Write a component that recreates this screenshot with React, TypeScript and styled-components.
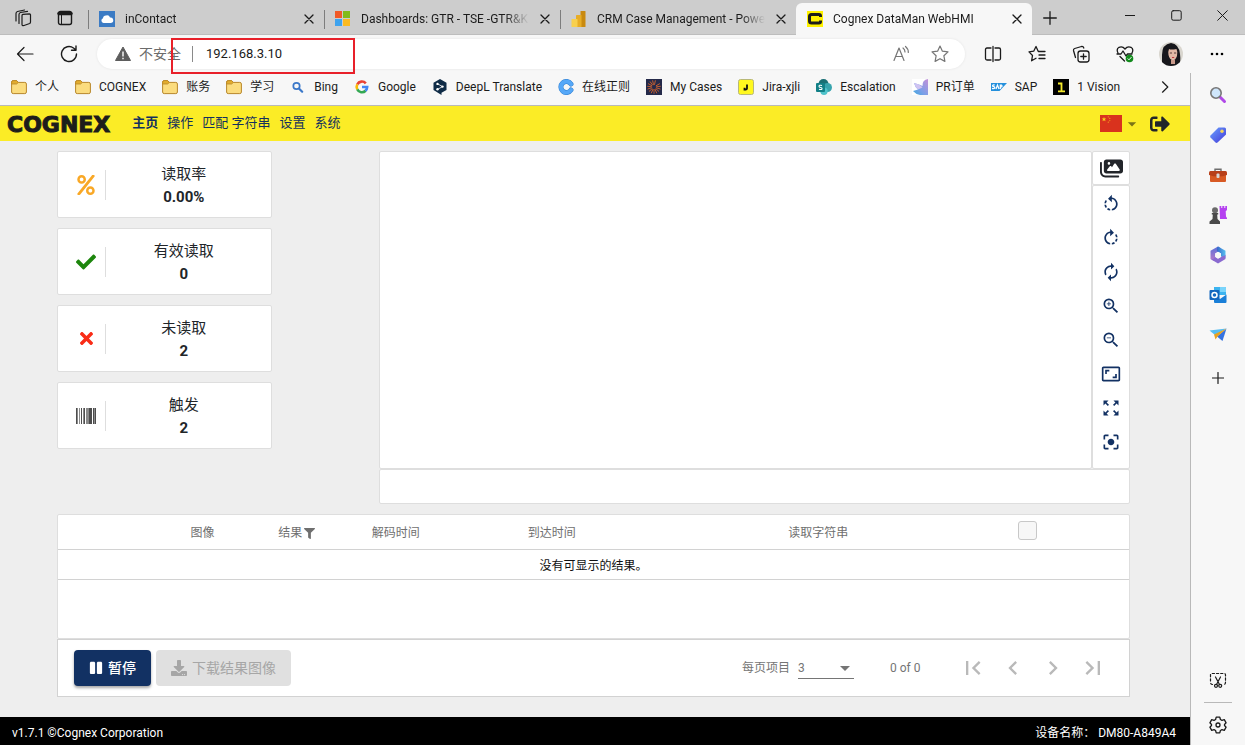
import React from 'react';
import styled, { createGlobalStyle, css } from 'styled-components';
import {
  MdRotateLeft, MdRotateRight, MdAutorenew, MdZoomIn, MdZoomOut, MdAspectRatio, MdZoomOutMap,
  MdCenterFocusStrong, MdFirstPage, MdChevronLeft, MdChevronRight, MdLastPage, MdArrowDropDown,
} from 'react-icons/md';
import { FaSignOutAlt, FaCheck, FaTimes, FaPercent, FaFilter, FaPause, FaDownload } from 'react-icons/fa';
import { FaImages } from 'react-icons/fa6';

const GlobalStyle = createGlobalStyle`
  *, *::before, *::after { box-sizing: border-box; }
  body {
    margin: 0;
    font-family: Roboto, "Noto Sans CJK SC", sans-serif;
    font-size: 12px;
    line-height: 16px;
    color: #1b1b1b;
    background: #f7f7f7;
  }
  button, input, select { font: inherit; color: inherit; }
  svg { display: block; flex: none; }
`;

/* ---------- shared ---------- */

const IconButton = styled.button<{ $w?: number; $h?: number; $color?: string }>`
  display: flex;
  align-items: center;
  justify-content: center;
  flex: none;
  width: ${(p) => p.$w ?? 44}px;
  height: ${(p) => p.$h ?? 30}px;
  padding: 0;
  border: 0;
  background: none;
  color: ${(p) => p.$color ?? '#1b1b1b'};
`;

type LineProps = { size?: number; children: React.ReactNode; box?: number; stroke?: number; color?: string };
const Line = ({ size = 18, box = 18, stroke = 1.2, color = 'currentColor', children }: LineProps) => (
  <svg width={size} height={size} viewBox={`0 0 ${box} ${box}`} fill="none" stroke={color}
    strokeWidth={stroke} strokeLinecap="round" strokeLinejoin="round" aria-hidden="true">
    {children}
  </svg>
);

const CloseIcon = ({ size = 10 }: { size?: number }) => (
  <Line size={size} box={10} stroke={1.3}><path d="M1 1l8 8M9 1L1 9" /></Line>
);

/* ---------- browser window ---------- */

const Window = styled.div`
  display: flex;
  flex-direction: column;
  min-height: 100vh;
`;

const TabStrip = styled.header`
  display: flex;
  height: 35px;
  background: #cdcdcd;
  border-bottom: 1px solid #bdbdbd;
`;

const StripTools = styled.div`
  display: flex;
  align-items: center;
  padding: 2px 2px 0;
`;

const Tab = styled.div<{ $active?: boolean }>`
  display: flex;
  align-items: center;
  flex: 0 1 236px;
  min-width: 0;
  gap: 10px;
  padding: 3px 9px 0 11px;
  position: relative;
  ${(p) => p.$active
    ? css`
        height: 32px;
        margin-top: 3px;
        padding-top: 0;
        background: #f7f7f7;
        border-radius: 6px 6px 0 0;
      `
    : css`
        &::before {
          content: '';
          position: absolute;
          left: 0;
          top: 10px;
          width: 1px;
          height: 19px;
          background: #7d7d7d;
        }
      `}
`;

const TabTitle = styled.span`
  flex: 1;
  min-width: 0;
  overflow: hidden;
  white-space: nowrap;
  mask-image: linear-gradient(90deg, #000 calc(100% - 24px), transparent);
`;

const WindowControls = styled.div`
  display: flex;
  margin-left: auto;
`;

const Toolbar = styled.div`
  display: flex;
  align-items: center;
  height: 38px;
  padding: 0 6px 0 3px;
  background: #f7f7f7;
`;

const AddressBar = styled.div`
  display: flex;
  align-items: center;
  flex: 1;
  min-width: 0;
  height: 30px;
  margin: 0 6px;
  padding: 0 6px 0 18px;
  border-radius: 15px;
  background: #fff;
  box-shadow: 0 0 3px rgba(0, 0, 0, 0.08);
  position: relative;
`;

const Insecure = styled.span`
  display: flex;
  align-items: center;
  gap: 8px;
  flex: none;
  padding-right: 11px;
  font-size: 14px;
  color: #6b6b6b;
`;

const AddressInput = styled.input`
  flex: 1;
  min-width: 0;
  padding: 0 0 0 13px;
  border: 0;
  border-left: 1px solid #8a8a8a;
  height: 16px;
  outline: 0;
  background: none;
  font-size: 13px;
`;

const Highlight = styled.div`
  position: absolute;
  left: 74px;
  top: -1px;
  width: 184px;
  height: 36px;
  border: 2px solid #e8202a;
  pointer-events: none;
`;

const Body = styled.div`
  display: flex;
  flex: 1;
`;

const Main = styled.div`
  display: flex;
  flex-direction: column;
  flex: 1;
  min-width: 0;
`;

const Bookmarks = styled.nav`
  display: flex;
  align-items: center;
  gap: 16px;
  height: 33px;
  padding: 0 15px 4px 11px;
  border-bottom: 1px solid #b9b9b9;
  background: #f7f7f7;
  white-space: nowrap;
  overflow: hidden;
`;

const Bookmark = styled.a`
  display: flex;
  align-items: center;
  gap: 8px;
  color: inherit;
  text-decoration: none;
`;

const More = styled.button`
  margin-left: auto;
  padding: 4px;
  border: 0;
  background: none;
`;

const Sidebar = styled.aside`
  display: flex;
  flex-direction: column;
  align-items: center;
  flex: none;
  width: 55px;
  padding: 2px 0 0;
  border-left: 1px solid #b9b9b9;
  background: #f7f7f7;
`;

const SidebarEnd = styled.div`
  display: flex;
  flex-direction: column;
  align-items: center;
  margin-top: auto;
`;

const Rule = styled.hr`
  width: 28px;
  margin: 2px 0;
  border: 0;
  border-top: 1px solid #b9b9b9;
`;

/* ---------- WebHMI page ---------- */

const AppHeader = styled.div`
  display: flex;
  align-items: center;
  height: 35px;
  padding: 0 20px 0 7px;
  background: #fbec26;
  color: #12305e;
`;

const Logo = styled.span`
  margin-right: 22px;
  padding-top: 3px;
  font: bold 22px/22px "DejaVu Sans", sans-serif;
  color: #1d1d1b;
  -webkit-text-stroke: 1px #1d1d1b;
`;

const Menu = styled.nav`
  display: flex;
  gap: 9px;
  padding-bottom: 2px;
  font-size: 13px;
`;

const MenuItem = styled.a<{ $current?: boolean }>`
  color: inherit;
  text-decoration: none;
  font-weight: ${(p) => (p.$current ? 700 : 400)};
`;

const HeaderTools = styled.div`
  display: flex;
  align-items: center;
  gap: 8px;
  margin-left: auto;
`;

const PlainButton = styled.button`
  display: flex;
  align-items: center;
  padding: 0;
  border: 0;
  background: none;
  color: #22252a;
`;

const Content = styled.main`
  flex: 1;
  padding: 10px 60px 20px 57px;
  background: #eee;
`;

const Upper = styled.div`
  display: grid;
  grid-template-columns: 2fr 7fr;
  column-gap: 10%;
  margin-bottom: 10px;
`;

const panel = css`
  background: #fff;
  border: 1px solid #dedede;
  border-radius: 2px;
`;

const Stats = styled.div`
  display: flex;
  flex-direction: column;
  gap: 10px;
`;

const StatCard = styled.section`
  ${panel}
  display: flex;
  align-items: center;
  height: 67px;
  padding: 0 9px;
`;

const StatIcon = styled.div`
  display: flex;
  align-items: center;
  justify-content: center;
  width: 39px;
  height: 30px;
  border-right: 1px solid #dedede;
`;

const StatText = styled.dl`
  flex: 1;
  margin: 0;
  padding-top: 2px;
  text-align: center;
  font-size: 15px;
  line-height: 23px;
  color: #212529;
`;

const StatValue = styled.dd`
  margin: 0;
  font-weight: 700;
`;

const Viewer = styled.div`
  display: grid;
  grid-template-columns: 1fr 38px;
  grid-template-rows: 34px 284px 35px;
`;

const ImagePane = styled.div`
  ${panel}
  grid-row: span 2;
`;

const ToolBox = styled.div`
  ${panel}
  display: flex;
  flex-direction: column;
  align-items: center;
  padding-top: 1px;
`;

const ResultStrip = styled.div`
  ${panel}
  grid-column: span 2;
`;

const TablePane = styled.div`
  ${panel}
  height: 125px;
`;

const Table = styled.table`
  width: 100%;
  table-layout: fixed;
  border-collapse: separate;
  border-spacing: 0;
`;

const Th = styled.th`
  height: 35px;
  padding: 2px 0 0;
  border-bottom: 1px solid #d2d2d2;
  font-weight: 400;
  color: #6f6f6f;
  text-align: center;
  white-space: nowrap;
`;

const Td = styled.td`
  height: 30px;
  padding: 2px 0 0;
  border-bottom: 1px solid #d2d2d2;
  text-align: center;
  color: #111;
`;

const WithIcon = styled.span`
  display: inline-flex;
  align-items: center;
  gap: 2px;
`;

const Check = styled.input`
  appearance: none;
  display: block;
  width: 19px;
  height: 19px;
  margin: 0 auto 6px;
  border: 1px solid #c8c8c8;
  border-radius: 3px;
  background: #f7f7f7;
`;

const Pager = styled.div`
  display: flex;
  align-items: center;
  gap: 5px;
  height: 58px;
  padding: 0 16px;
  border: 1px solid #d2d2d2;
  background: #fff;
  color: #757575;
`;

const ActionButton = styled.button<{ $primary?: boolean }>`
  display: flex;
  align-items: center;
  gap: 5px;
  height: 36px;
  padding: 0 15px;
  border: 0;
  border-radius: 4px;
  font-size: 14px;
  white-space: nowrap;
  color: ${(p) => (p.$primary ? '#fff' : '#a6a6a6')};
  background: ${(p) => (p.$primary ? '#123163' : '#e0e0e0')};
  ${(p) => p.$primary && 'font-weight: 500; box-shadow: 0 2px 3px rgba(0, 0, 0, 0.35);'}
`;

const PageSize = styled.label`
  display: flex;
  align-items: center;
  gap: 8px;
  margin-left: auto;
`;

const SelectBox = styled.span`
  display: flex;
  align-items: center;
  position: relative;
  border-bottom: 1px solid #757575;
`;

const Select = styled.select`
  appearance: none;
  width: 56px;
  height: 20px;
  padding: 0;
  border: 0;
  outline: 0;
  background: none;
`;

const SelectArrow = styled.span`
  position: absolute;
  right: -3px;
  top: -2px;
  pointer-events: none;
`;

const Range = styled.span`
  width: 58px;
  margin: 0 0 0 31px;
`;

const PageButtons = styled.div`
  display: flex;
`;

const Footer = styled.footer`
  display: flex;
  justify-content: space-between;
  align-items: center;
  height: 28px;
  padding: 4px 14px 0 12px;
  background: #000;
  color: #fff;
`;

/* ---------- small drawings ---------- */

const Folder = () => (
  <svg width="16" height="16" viewBox="0 0 16 16" aria-hidden="true">
    <path d="M.6 3.2Q.6 1.6 2.2 1.6H5.6L7.4 3.4H13.8Q15.4 3.4 15.4 5V13Q15.4 14.6 13.8 14.6H2.2Q.6 14.6.6 13Z" fill="#fbdc7e" stroke="#b8872a" />
    <path d="M.6 5V3.2Q.6 1.6 2.2 1.6H5.6L7.4 3.4 5.6 5Z" fill="#e2ac2e" stroke="#b8872a" strokeWidth=".8" />
  </svg>
);

const CloudIcon = () => (
  <svg width="16" height="16" viewBox="0 0 16 16" aria-hidden="true">
    <path fill="#3b7bc4" d="M0 0h16v16H0z" />
    <path fill="#fff" d="M4.500 12A2.500 2.500 0 0 1 4 7.200A3 3 0 0 1 7 4.500 3.200 3.200 0 0 1 11 6.600 2.700 2.700 0 0 1 12 12Z" />
  </svg>
);

const MicrosoftIcon = () => (
  <svg width="16" height="16" viewBox="0 0 16 16" aria-hidden="true">
    <path fill="#f05a28" d="M0 0h7v7H0z" /><path fill="#82bb19" d="M8 0h7v7H8z" />
    <path fill="#3fa3ee" d="M0 8h7v7H0z" /><path fill="#fbba22" d="M8 8h7v7H8z" />
  </svg>
);

const PowerBiIcon = () => (
  <svg width="16" height="16" viewBox="0 0 16 16" aria-hidden="true">
    <rect x="9.500" width="5" height="16" rx=".6" fill="#c98a10" />
    <rect x="5" y="4" width="5.500" height="12" rx=".6" fill="#e8ad26" />
    <rect x=".5" y="8" width="6" height="8" rx=".6" fill="#f8d04e" />
  </svg>
);

const CognexIcon = () => (
  <svg width="16" height="16" viewBox="0 0 16 16" aria-hidden="true">
    <path fill="#fff200" d="M0 0h16v16H0z" />
    <path d="M13.500 6V5Q13.500 3.500 12 3.500H4.500Q2.500 3.500 2.500 5.500V10Q2.500 12 4.500 12H12Q13.500 12 13.500 10.500V9.500" fill="none" stroke="#1d1d1b" strokeWidth="3" />
  </svg>
);

const BingIcon = () => (
  <Line size={16} box={16} stroke={1.700} color="#3b78c9"><circle cx="6.500" cy="7" r="3.200" /><path d="M9.200 9.700l3 3" strokeWidth="2.200" /></Line>
);

const GoogleIcon = () => (
  <svg width="16" height="16" viewBox="-1 -1 16 16" fill="none" strokeWidth="2.600" aria-hidden="true">
    <path stroke="#ea4335" d="M2.300 4.400A5.200 5.200 0 0 1 10.800 3.300" />
    <path stroke="#fbbc05" d="M2.300 9.400A5.200 5.200 0 0 1 2.300 4.400" />
    <path stroke="#34a853" d="M10.600 10.800A5.200 5.200 0 0 1 2.300 9.400" />
    <path stroke="#4285f4" d="M7 7h5.200A5.200 5.200 0 0 1 10.400 10.800" />
  </svg>
);

const DeepLIcon = () => (
  <svg width="16" height="16" viewBox="0 0 16 16" aria-hidden="true">
    <path fill="#0f2b46" d="M8 0l6.500 3.700v7.400L9.500 13.800V16L1.500 11.100V3.700Z" />
    <path d="M5.500 4.800l5 2.800-5 2.800" fill="none" stroke="#fff" strokeWidth=".8" />
    <circle cx="5.500" cy="4.900" r="1.200" fill="#fff" /><circle cx="10.500" cy="7.600" r="1.200" fill="#fff" /><circle cx="5.500" cy="10.300" r="1.200" fill="#fff" />
  </svg>
);

const RegexIcon = () => (
  <svg width="16" height="16" viewBox="0 0 16 16" aria-hidden="true">
    <path d="M13 5A5.500 5.500 0 1 0 13 11" fill="none" stroke="#2f7fd0" strokeWidth="5" strokeLinecap="round" />
    <path d="M13 5A5.500 5.500 0 1 0 13 11" fill="none" stroke="#56a8f8" strokeWidth="4" strokeLinecap="round" />
  </svg>
);

const CasesIcon = () => (
  <svg width="16" height="16" viewBox="0 0 16 16" aria-hidden="true">
    <path fill="#252a4a" d="M0 0h16v16H0z" />
    {Array.from({ length: 14 }, (_, i) => (
      <path key={i} d="M8 5.800V1.200" stroke="#d9662c" strokeWidth=".8" transform={`rotate(${i * 24 + 60} 8 8)`} />
    ))}
  </svg>
);

const JiraIcon = () => (
  <svg width="16" height="16" viewBox="0 0 16 16" aria-hidden="true">
    <rect x=".5" y=".5" width="15" height="15" rx="2" fill="#fff81f" stroke="#b8b878" />
    <path d="M9 5.500V9.600Q9 10.500 8 10.500H6.500V8.800" fill="none" stroke="#111" strokeWidth="1.800" />
  </svg>
);

const SharePointIcon = () => (
  <svg width="16" height="16" viewBox="0 0 16 16" aria-hidden="true">
    <circle cx="7.500" cy="5" r="5" fill="#1a6f74" /><circle cx="11.500" cy="8.500" r="4.500" fill="#37a4ad" />
    <circle cx="8" cy="12.300" r="3.700" fill="#4fc3ca" /><rect y="4" width="9" height="9" rx="1" fill="#128087" />
    <path d="M6 6.500Q3 5.700 3 7.300 3 8.300 4.500 8.500 6.200 8.800 6 9.900 5.500 11 3 10.300" fill="none" stroke="#fff" strokeWidth="1.100" />
  </svg>
);

const OrderIcon = () => (
  <svg width="16" height="16" viewBox="0 0 16 16" aria-hidden="true">
    <defs><linearGradient id="ord" x1="1" x2="0" y2="1"><stop stopColor="#c490d8" /><stop offset=".6" stopColor="#7aa0e8" /><stop offset="1" stopColor="#3fa8dc" /></linearGradient></defs>
    <path fill="#fff" d="M0 0h16v16H0z" />
    <path d="M16 0Q10 1 10.500 7 9 6 2 4 3 8 6 10.500L1 12Q4 15.500 8 16H16Z" fill="url(#ord)" />
    <path d="M2 4Q8 5 10.500 8.500L6 10.500Q3 8 2 4Z" fill="#cfc3f2" />
  </svg>
);

const SapIcon = () => (
  <svg width="16" height="16" viewBox="0 0 16 16" aria-hidden="true">
    <path d="M0 4H16L8.500 12H0Z" fill="#2490dc" />
    <path d="M3.800 6Q1.300 5.500 1.600 7.200 4.200 7.800 3.800 9 3 9.900 1 9.400M5 10L6.500 6 8 10M9.300 10V6.200H10.600Q12 7.400 9.600 8.300" fill="none" stroke="#fff" strokeWidth="1.200" />
  </svg>
);

const OneIcon = () => (
  <svg width="16" height="16" viewBox="0 0 16 16" aria-hidden="true">
    <path d="M0 0h16v16H0z" />
    <path d="M5 4.500H8.500V12M5 12.300H12" fill="none" stroke="#f4e92a" strokeWidth="1.800" />
  </svg>
);

const Avatar = () => (
  <svg width="24" height="24" viewBox="0 0 24 24" aria-hidden="true">
    <defs><clipPath id="av"><circle cx="12" cy="12" r="12" /></clipPath></defs>
    <g clipPath="url(#av)">
      <path fill="#d9d6cf" d="M0 0h24v24H0z" />
      <path fill="#17171c" d="M12 1Q3 2 3 13L3 24H20Q22 20 21 12 20 2 12 1Z" />
      <path fill="#e2b9a6" d="M10 7Q12 8 17.500 7 19 10 18 14 16.500 18 14 18.500 10.500 17.500 9.500 13 9 9 10 7Z" />
      <path fill="#c9998a" d="M12 18h4v4h-4z" />
      <path d="M10.800 11h2.200M15 11h2.200" stroke="#4b3230" strokeWidth=".9" />
      <path d="M13 15.500h2.200" stroke="#c4393f" />
    </g>
  </svg>
);

const Barcode = () => (
  <svg width="20" height="16" viewBox="0 0 20 16" aria-hidden="true">
    <path fill="#4d4d4d" d="M0 0h1v16H0zM5 0h1v16H5zM8 0h1v16H8zM13 0h2v16h-2zM15 0h1v16h-1zM17 0h1v16h-1zM19 0h1v16h-1z" />
    <path fill="#8a8a8a" d="M1 0h1v16H1zM3 0h1v16H3zM7 0h1v16H7zM10 0h2v16h-2zM12 0h1v16h-1zM18 0h1v16h-1z" />
  </svg>
);

const Flag = () => (
  <svg width="22" height="17" viewBox="0 0 22 17" aria-hidden="true">
    <path fill="#d9321d" d="M0 0h22v17H0z" />
    <path fill="#fbd21f" d="M4 2l.6 1.500h1.600L5 4.500l.5 1.700L4 5.200l-1.500 1L3 4.500 1.800 3.500h1.600Z" />
    <g fill="#f0a01f"><circle cx="8.300" cy="1.800" r=".6" /><circle cx="9.800" cy="3.400" r=".6" /><circle cx="9.800" cy="5.600" r=".6" /><circle cx="8.300" cy="7.200" r=".6" /></g>
  </svg>
);

/* sidebar drawings */
const SearchArt = () => (
  <svg width="18" height="18" viewBox="0 0 18 18" fill="none" aria-hidden="true">
    <path d="M11 11l4.500 4.500" stroke="#b048e8" strokeWidth="3" strokeLinecap="round" />
    <circle cx="7" cy="7" r="5.200" fill="#cfe6fb" stroke="#777" strokeWidth="1.600" />
  </svg>
);
const TagArt = () => (
  <svg width="18" height="18" viewBox="0 0 18 18" aria-hidden="true">
    <defs><linearGradient id="tag" x2="1" y2="1"><stop stopColor="#6aa2ff" /><stop offset="1" stopColor="#4338d8" /></linearGradient></defs>
    <path d="M9.500 1.500H15.500Q17 1.500 17 3V8.500L8.500 16.500Q7.500 17.300 6.500 16.500L1.500 11.500Q.7 10.500 1.500 9.500Z" fill="url(#tag)" />
    <circle cx="13" cy="5.300" r="1.700" fill="#f4d45a" />
  </svg>
);
const ToolArt = () => (
  <svg width="18" height="18" viewBox="0 0 18 18" fill="none" aria-hidden="true">
    <path d="M6 6V3.300H12V6" stroke="#6e6e6e" strokeWidth="1.400" />
    <rect x="1" y="5.500" width="16" height="10.500" rx="1" fill="#d85a24" />
    <path d="M0 9Q9 12 18 9V6.500Q18 5 16.500 5H1.500Q0 5 0 6.500Z" fill="#b8401a" />
    <rect x="7.500" y="7.500" width="3" height="4.500" rx="1" fill="#d8d8d8" />
  </svg>
);
const GameArt = () => (
  <svg width="18" height="18" viewBox="0 0 18 18" aria-hidden="true">
    <path d="M10.500 0h1.800v2h1V0h2v2h1V0H18v4l-1.300 1.200.3 5.300 1 1.500V13h-7Z" fill="#b541f0" />
    <circle cx="6" cy="4.300" r="3" fill="#6a6a6a" /><path d="M2.800 7h6.400v1.600H8.200L8.500 13l2.500 2.500V18H.5V15.500L3.500 13 3.800 8.600h-1Z" fill="#4a4a4a" />
  </svg>
);
const OfficeArt = () => (
  <svg width="18" height="18" viewBox="0 0 18 18" aria-hidden="true">
    <defs>
      <linearGradient id="of1" x2="0" y2="1"><stop stopColor="#5a6fd8" /><stop offset="1" stopColor="#b87ac8" /></linearGradient>
      <linearGradient id="of2" x2="1" y2="0"><stop stopColor="#3466c8" /><stop offset="1" stopColor="#58c0f0" /></linearGradient>
    </defs>
    <path d="M9 .5L1.500 4.800V13L5 15Q6.500 13 6.200 11V7.500L11.500 4.500V2Z" fill="url(#of1)" />
    <path d="M9 .5L16.500 4.800V12L12 10.500V7.500L8 5.200Q7.500 2 9 .5Z" fill="url(#of2)" />
    <path d="M16.500 8.500V13L9 17.500 1.500 13Q4 14 6.200 11L9 12.800 13 10.500Q16 10 16.500 8.500Z" fill="#8a6ad0" />
    <path d="M9 5.800L12 7.500V10.800L9 12.500 6.200 10.800V7.500Z" fill="#f7f7f7" />
  </svg>
);
const OutlookArt = () => (
  <svg width="18" height="18" viewBox="0 0 18 18" aria-hidden="true">
    <path d="M5 1H16Q17 1 17 2V9H5Z" fill="#3cb4f0" /><path d="M11 1h5q1 0 1 1v4h-6z" fill="#7ad4fb" />
    <path d="M5 9L11 13 17.500 8.500V16Q17.500 17 16.500 17H6Q5 17 5 16Z" fill="#1a7fd8" />
    <rect x=".5" y="4" width="10" height="10" rx="1" fill="#1568bf" />
    <circle cx="5.500" cy="9" r="2.500" fill="none" stroke="#fff" strokeWidth="1.500" />
  </svg>
);
const PlaneArt = () => (
  <svg width="18" height="18" viewBox="0 0 18 18" aria-hidden="true">
    <path d="M.5 4.500L17.500 2.500 6 9Z" fill="#56bdf2" />
    <path d="M17.500 2.500L13.500 15 8 10.500Z" fill="#3572e0" />
    <path d="M17.500 2.500L5 8.500 6.500 13.500 8.500 10.500Z" fill="#e8a21f" />
  </svg>
);

/* ---------- data ---------- */

const bookmarks: [React.ReactNode, string][] = [
  [<Folder />, '个人'], [<Folder />, 'COGNEX'], [<Folder />, '账务'], [<Folder />, '学习'],
  [<BingIcon />, 'Bing'], [<GoogleIcon />, 'Google'], [<DeepLIcon />, 'DeepL Translate'],
  [<RegexIcon />, '在线正则'], [<CasesIcon />, 'My Cases'], [<JiraIcon />, 'Jira-xjli'],
  [<SharePointIcon />, 'Escalation'], [<OrderIcon />, 'PR订单'], [<SapIcon />, 'SAP'], [<OneIcon />, '1 Vision'],
];

const tabs: { icon: React.ReactNode; title: string; active?: boolean }[] = [
  { icon: <CloudIcon />, title: 'inContact' },
  { icon: <MicrosoftIcon />, title: 'Dashboards: GTR - TSE -GTR&KI' },
  { icon: <PowerBiIcon />, title: 'CRM Case Management - Power' },
  { icon: <CognexIcon />, title: 'Cognex DataMan WebHMI', active: true },
];

const sidebarApps: [React.ReactNode, string][] = [
  [<SearchArt />, '搜索'], [<TagArt />, '购物'], [<ToolArt />, '工具'], [<GameArt />, '游戏'],
  [<OfficeArt />, 'Microsoft 365'], [<OutlookArt />, 'Outlook'], [<PlaneArt />, 'Drop'],
];

const stats: [React.ReactNode, string, string][] = [
  [<FaPercent size={20} color="#f9a826" />, '读取率', '0.00%'],
  [<FaCheck size={20} color="#1d860d" />, '有效读取', '0'],
  [<FaTimes size={19} color="#f92c17" />, '未读取', '2'],
  [<Barcode />, '触发', '2'],
];

const viewTools: [React.ReactNode, string][] = [
  [<MdRotateLeft size={20} />, '向左旋转'], [<MdRotateRight size={20} />, '向右旋转'],
  [<MdAutorenew size={20} />, '重置旋转'], [<MdZoomIn size={20} />, '放大'], [<MdZoomOut size={20} />, '缩小'],
  [<MdAspectRatio size={20} />, '适应大小'], [<MdZoomOutMap size={20} />, '全屏'],
  [<MdCenterFocusStrong size={20} />, '对焦'],
];

const columns = [
  { w: '9.1%', label: '' }, { w: '8.8%', label: '图像' }, { w: '8.8%', label: '结果', filter: true },
  { w: '9.7%', label: '解码时间' }, { w: '19.4%', label: '到达时间' }, { w: '30.4%', label: '读取字符串' },
  { w: '8.6%', label: '', check: true }, { w: '5.2%', label: '' },
];

export default function App() {
  return (
    <Window>
      <GlobalStyle />
      <TabStrip>
        <StripTools>
          <IconButton $w={42} aria-label="工作区">
            <Line stroke={1.200}><path d="M8 6.500Q8 5.500 9 5.300L15.500 4.800Q16.500 4.800 16.500 5.800V13Q16.500 14 15.700 14.500L10 16.500Q8 17 8 15.500ZM5 14.500V5.500Q5 4 6.500 3.500L13.500 2.300M2 12V4.500Q2 3 3.500 2.500L10.500 1" /></Line>
          </IconButton>
          <IconButton $w={42} aria-label="标签页操作">
            <Line size={16} box={16} stroke={1.400}><rect x="1.500" y="1.500" width="13" height="13" rx="2" /><path d="M2 3.500h12" strokeWidth="3.400" /><path d="M4.500 5v9" strokeWidth="1" /></Line>
          </IconButton>
        </StripTools>
        {tabs.map((t) => (
          <Tab key={t.title} $active={t.active}>
            {t.icon}
            <TabTitle>{t.title}</TabTitle>
            <IconButton $w={12} $h={22} aria-label="关闭标签页"><CloseIcon /></IconButton>
          </Tab>
        ))}
        <IconButton $w={36} $h={35} aria-label="新建标签页"><Line size={14} box={14} stroke={1.300}><path d="M7 .7v12.600M.7 7h12.600" /></Line></IconButton>
        <WindowControls>
          <IconButton $w={46} aria-label="最小化"><Line size={10} box={10} stroke={1}><path d="M0 5.500h10" /></Line></IconButton>
          <IconButton $w={46} aria-label="最大化"><Line size={11} box={11} stroke={1}><rect x=".7" y=".7" width="9.500" height="9.500" rx="1.500" /></Line></IconButton>
          <IconButton $w={46} aria-label="关闭"><Line size={11} box={11} stroke={1}><path d="M.7 .7l9.600 9.600M10.300 .7L.7 10.300" /></Line></IconButton>
        </WindowControls>
      </TabStrip>

      <Toolbar>
        <IconButton aria-label="返回"><Line><path d="M17 9H1.500M8 2.500L1.500 9 8 15.500" /></Line></IconButton>
        <IconButton aria-label="刷新"><Line stroke={1.400}><path d="M16.500 9A7.500 7.500 0 1 1 13.500 3L16 5M16 1v4.300h-4.500" /></Line></IconButton>
        <AddressBar>
          <Insecure>
            <svg width="16" height="16" viewBox="0 0 16 16" aria-hidden="true">
              <path d="M8 1L15.500 14.500H.5Z" fill="#5d5d5d" stroke="#5d5d5d" strokeLinejoin="round" />
              <path d="M8 5.500v5M8 11.800v1.400" stroke="#fff" strokeWidth="1.400" />
            </svg>
            不安全
          </Insecure>
          <AddressInput aria-label="地址栏" defaultValue="192.168.3.10" />
          <IconButton $w={39} $color="#767676" aria-label="朗读此页"><Line stroke={1.200}><path d="M2 15.500L7 3 12 15.500M3.800 11.500h6.400M11 3Q13 4.500 13 7M13.500 1.500Q16.500 4 16.300 7.500" /></Line></IconButton>
          <IconButton $w={39} $color="#767676" aria-label="收藏"><Line><path d="M9 1l2.400 5.200 5.600.7-4.100 3.900 1 5.600L9 13.700l-4.900 2.700 1-5.600L1 6.900l5.600-.7z" /></Line></IconButton>
          <Highlight />
        </AddressBar>
        <IconButton aria-label="分屏"><Line stroke={1.300}><path d="M7 3H3Q1.500 3 1.500 4.500v9Q1.500 15 3 15h4M11 3h4q1.500 0 1.500 1.500v9Q16.500 15 15 15h-4M9 1.500v15" /></Line></IconButton>
        <IconButton aria-label="收藏夹"><Line stroke={1.300}><path d="M17 6.500H10.300L8 1.500 5.700 6.200 1 6.900 4.500 10.500 3.600 15.800 8 13.300M11 10h6M11 13.500h6" /></Line></IconButton>
        <IconButton aria-label="集锦"><Line stroke={1.300}><rect x="6" y="6" width="11" height="11" rx="2.500" /><path d="M11.500 8.800v5.400M8.800 11.500h5.400M3.500 12.500L1.500 5.500Q1.200 4 2.700 3.500L9.500 1.500Q11.300 1.200 11.800 3" /></Line></IconButton>
        <IconButton aria-label="性能">
          <Line stroke={1.300}><path d="M2 8Q0 4 3 2.300 6.500 .8 9 4 11.500 .8 15 2.300 18 4 16 8M1 9h4l2-3 3 5 1.500-2H16M4 11.500L8.500 16" /><circle cx="13.500" cy="13.500" r="3.800" fill="#128a1c" stroke="none" /><path d="M12 13.800l1 1 2.200-2.400" stroke="#fff" strokeWidth="1" /></Line>
        </IconButton>
        <IconButton $w={48} aria-label="个人资料"><Avatar /></IconButton>
        <IconButton aria-label="设置及其他"><svg width="14" height="4" viewBox="0 0 14 4" aria-hidden="true"><circle cx="2" cy="2" r="1.300" /><circle cx="7" cy="2" r="1.300" /><circle cx="12" cy="2" r="1.300" /></svg></IconButton>
      </Toolbar>

      <Body>
        <Main>
          <Bookmarks>
            {bookmarks.map(([icon, label]) => <Bookmark key={label} href="#">{icon}{label}</Bookmark>)}
            <More aria-label="更多收藏"><Line size={12} box={12} stroke={1.200}><path d="M3.500 .8L8.800 6 3.500 11.200" /></Line></More>
          </Bookmarks>

          <AppHeader>
            <Logo>COGNEX</Logo>
            <Menu>
              {['主页', '操作', '匹配 字符串', '设置', '系统'].map((m, i) => (
                <MenuItem key={m} href="#" $current={i === 0}>{m}</MenuItem>
              ))}
            </Menu>
            <HeaderTools>
              <PlainButton aria-label="语言"><Flag /><MdArrowDropDown size={20} color="#7a7416" /></PlainButton>
              <PlainButton aria-label="退出"><FaSignOutAlt size={20} /></PlainButton>
            </HeaderTools>
          </AppHeader>

          <Content>
            <Upper>
              <Stats>
                {stats.map(([icon, label, value]) => (
                  <StatCard key={label}>
                    <StatIcon>{icon}</StatIcon>
                    <StatText><dt>{label}</dt><StatValue>{value}</StatValue></StatText>
                  </StatCard>
                ))}
              </Stats>
              <Viewer>
                <ImagePane />
                <ToolBox><IconButton $w={36} $h={30} $color="#22252a" aria-label="图像"><FaImages size={23} /></IconButton></ToolBox>
                <ToolBox>
                  {viewTools.map(([icon, label]) => (
                    <IconButton key={label} $w={36} $h={34} $color="#123163" aria-label={label}>{icon}</IconButton>
                  ))}
                </ToolBox>
                <ResultStrip />
              </Viewer>
            </Upper>

            <TablePane>
              <Table>
                <colgroup>{columns.map((c, i) => <col key={i} width={c.w} />)}</colgroup>
                <thead>
                  <tr>
                    {columns.map((c, i) => (
                      <Th key={i}>
                        {c.check ? <Check type="checkbox" aria-label="全选" />
                          : c.filter ? <WithIcon>{c.label}<FaFilter size={11} /></WithIcon> : c.label}
                      </Th>
                    ))}
                  </tr>
                </thead>
                <tbody><tr><Td colSpan={8}>没有可显示的结果。</Td></tr></tbody>
              </Table>
            </TablePane>
            <Pager>
              <ActionButton $primary><FaPause size={14} />暂停</ActionButton>
              <ActionButton disabled><FaDownload size={16} />下载结果图像</ActionButton>
              <PageSize>
                每页项目
                <SelectBox>
                  <Select defaultValue="3"><option>3</option><option>10</option></Select>
                  <SelectArrow><MdArrowDropDown size={24} /></SelectArrow>
                </SelectBox>
              </PageSize>
              <Range>0 of 0</Range>
              <PageButtons>
                <IconButton $w={40} $color="#b9b9b9" aria-label="首页"><MdFirstPage size={28} /></IconButton>
                <IconButton $w={40} $color="#b9b9b9" aria-label="上一页"><MdChevronLeft size={28} /></IconButton>
                <IconButton $w={40} $color="#b9b9b9" aria-label="下一页"><MdChevronRight size={28} /></IconButton>
                <IconButton $w={40} $color="#b9b9b9" aria-label="末页"><MdLastPage size={28} /></IconButton>
              </PageButtons>
            </Pager>
          </Content>

          <Footer>
            <span>v1.7.1 ©Cognex Corporation</span>
            <span>设备名称： DM80-A849A4</span>
          </Footer>
        </Main>

        <Sidebar>
          {sidebarApps.map(([icon, label]) => <IconButton key={label} $h={40} aria-label={label}>{icon}</IconButton>)}
          <IconButton $h={46} aria-label="自定义边栏"><Line size={12} box={12} stroke={1.200}><path d="M6 .5v11M.5 6h11" /></Line></IconButton>
          <SidebarEnd>
            <IconButton $h={40} aria-label="截图">
              <Line><path d="M1.500 10V4Q1.500 2.500 3 2.500H15Q16.500 2.500 16.500 4V11Q16.500 13.500 14.500 13.500M3.500 13.500Q1.500 13.500 1.500 11" strokeDasharray="2.200 2" /><path d="M6.500 6l4 7.500M11.500 6l-4 7.500" /><circle cx="7" cy="14.800" r="1.500" /><circle cx="11.200" cy="14.800" r="1.500" /></Line>
            </IconButton>
            <Rule />
            <IconButton $h={40} aria-label="设置">
              <Line stroke={1.300}><circle cx="9" cy="9" r="2" /><path d="M7.200 1.200h3.600l.6 2.300 1.600.9 2.300-.7 1.800 3.100L15.500 8.500v1l1.600 1.700-1.800 3.100-2.300-.7-1.600.9-.6 2.300H7.200l-.6-2.300-1.600-.9-2.300.7-1.800-3.100L2.500 9.500v-1L.9 6.800l1.800-3.100 2.300.7 1.600-.9z" /></Line>
            </IconButton>
          </SidebarEnd>
        </Sidebar>
      </Body>
    </Window>
  );
}
